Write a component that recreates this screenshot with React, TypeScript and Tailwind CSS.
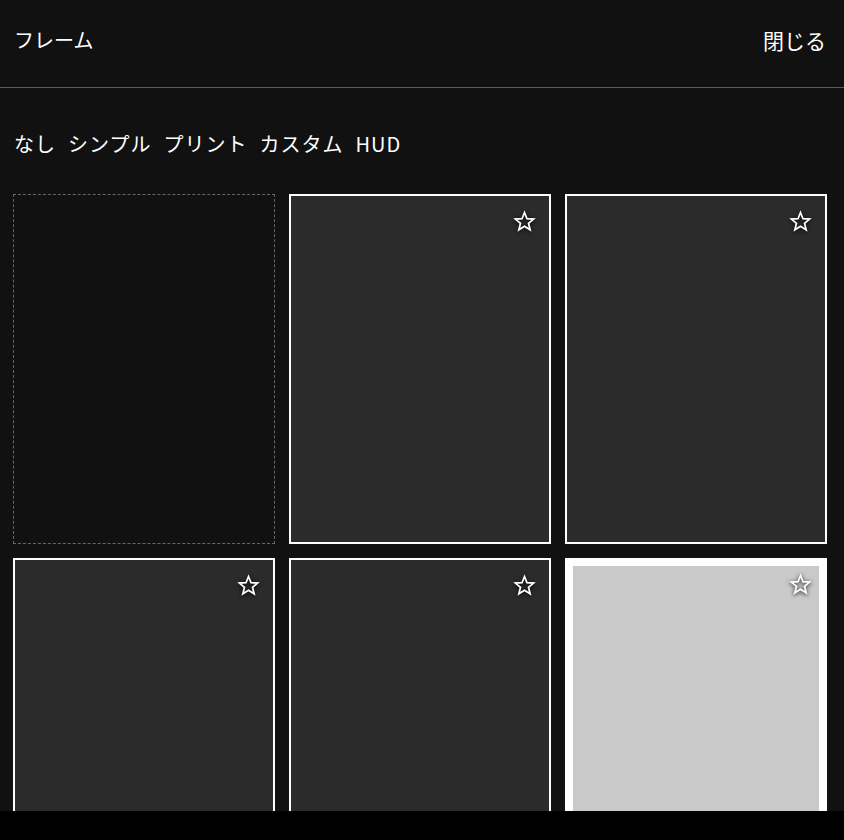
const font = { fontFamily: '"Noto Sans CJK JP", "Noto Sans", sans-serif' };

const tabs = ["なし", "シンプル", "プリント", "カスタム", "HUD"];

function StarIcon() {
  return (
    <svg
      viewBox="0 0 24 24"
      className="h-[23px] w-[23px] drop-shadow-[0_1px_2px_rgba(0,0,0,0.9)]"
      fill="none"
      stroke="white"
      strokeWidth={1.8}
      strokeLinejoin="miter"
    >
      <polygon points="12,2.6 14.6,9.1 21.5,9.5 16.2,13.9 17.9,20.7 12,17 6.1,20.7 7.8,13.9 2.5,9.5 9.4,9.1" />
    </svg>
  );
}

type Frame = {
  id: number;
  kind: "none" | "plain" | "thick";
};

const frames: Frame[] = [
  { id: 0, kind: "none" },
  { id: 1, kind: "plain" },
  { id: 2, kind: "plain" },
  { id: 3, kind: "plain" },
  { id: 4, kind: "plain" },
  { id: 5, kind: "thick" },
];

function FrameCard({ frame }: { frame: Frame }) {
  if (frame.kind === "none") {
    return <div className="h-[350px] border border-dashed border-[#666] bg-[#111]" />;
  }
  if (frame.kind === "thick") {
    return (
      <div className="relative h-[350px] border-8 border-white bg-[#c9c9c9]">
        <div className="absolute top-[7px] right-[7px]">
          <StarIcon />
        </div>
      </div>
    );
  }
  return (
    <div className="relative h-[350px] border-2 border-white bg-[#2b2b2b]">
      <div className="absolute top-[14px] right-[13px]">
        <StarIcon />
      </div>
    </div>
  );
}

export default function App() {
  return (
    <div className="h-[840px] w-[844px] bg-black text-white" style={font}>
      <div className="h-[811px] overflow-hidden bg-[#111]">
        {/* Header */}
        <div className="flex h-[88px] items-center justify-between border-b border-[#5a5a5a] pr-[18px] pl-[14px] pb-[7px]">
          <span className="text-[20px] leading-[28px]">フレーム</span>
          <span className="text-[21px] leading-[28px]">閉じる</span>
        </div>

        {/* Tabs */}
        <div className="flex gap-[12px] pt-[42px] pb-[36px] pl-[14px]">
          {tabs.map((t) => (
            <button key={t} className="text-[20px] leading-[28px] tracking-[1px] text-white">
              {t}
            </button>
          ))}
        </div>

        {/* Frame grid */}
        <div className="grid grid-cols-3 gap-[14px] pr-[17px] pl-[13px]">
          {frames.map((f) => (
            <FrameCard key={f.id} frame={f} />
          ))}
        </div>
      </div>
    </div>
  );
}
